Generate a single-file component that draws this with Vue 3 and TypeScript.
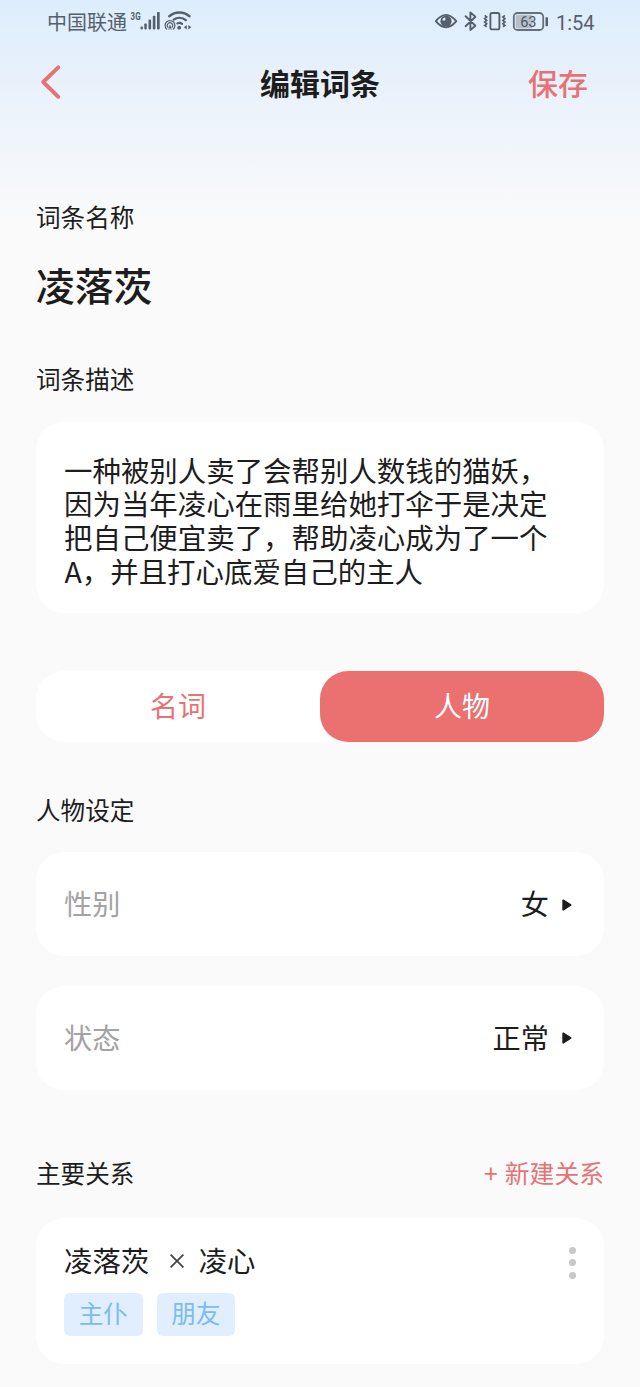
<script setup lang="ts">
import { ref } from 'vue'

interface Setting {
  label: string
  value: string
}

interface Relation {
  from: string
  to: string
  tags: string[]
}

const name = '凌落茨'
const description: string[] = [
  '一种被别人卖了会帮别人数钱的猫妖，',
  '因为当年凌心在雨里给她打伞于是决定',
  '把自己便宜卖了，帮助凌心成为了一个',
  'A，并且打心底爱自己的主人',
]
const tabs: string[] = ['名词', '人物']
const activeTab = ref(1)
const settings: Setting[] = [
  { label: '性别', value: '女' },
  { label: '状态', value: '正常' },
]
const relations: Relation[] = [{ from: '凌落茨', to: '凌心', tags: ['主仆', '朋友'] }]
</script>

<template>
  <div class="page">
    <div class="status">
      <span class="carrier">中国联通</span>
      <svg class="signal" width="62" height="24" viewBox="130 9 62 24">
        <text x="130.6" y="20" class="net" textLength="10" lengthAdjust="spacingAndGlyphs">3G</text>
        <g fill="#55606c">
          <rect x="140.5" y="26.6" width="2.4" height="2.8" rx=".8" />
          <rect x="144.3" y="23.4" width="2.5" height="6" rx=".8" />
          <rect x="148.5" y="19.6" width="2.6" height="9.8" rx=".8" />
          <rect x="152.8" y="15.8" width="2.6" height="13.6" rx=".8" />
          <rect x="157" y="12" width="2.7" height="17.4" rx=".8" />
        </g>
        <g fill="none" stroke="#55606c" stroke-linecap="round">
          <path d="M169.3 16.2C175.3 11.3 183.5 11.3 189.5 16.2" stroke-width="2.4" />
          <path d="M173.7 19.6C177.3 17.1 182.2 17.2 185.8 20.2" stroke-width="2.3" />
          <path d="M177.4 23.4C178.9 22.6 180.8 22.8 182 23.9" stroke-width="2.2" />
          <path d="M166.6 29A4.9 4.9 0 1 1 173.4 29" stroke-width="1.2" />
          <path d="M168 27.3A2.7 2.7 0 1 1 172 27.3" stroke-width="1.1" />
          <path d="M170 25.8L168.9 29.3M170 25.8L171.1 29.3" stroke-width="1" />
        </g>
        <circle cx="179.2" cy="27.7" r="1.9" fill="#55606c" />
        <path d="M186.8 25v4.6l-3-2.3zM188.3 25v4.6l3-2.3z" fill="#55606c" />
      </svg>
      <svg class="indicators" width="116" height="24" viewBox="434 9 116 24">
        <path d="M435.8 21.2Q446 8.5 456.3 21.2Q446 33.5 435.8 21.2Z" fill="none" stroke="#55606c" stroke-width="1.9" stroke-linejoin="round" />
        <circle cx="446" cy="21.2" r="5.6" fill="#55606c" />
        <path d="M442.2 20.2A4.2 4.2 0 0 1 445.2 17.2L445.4 19.4Q445 20.8 443.6 20.6Z" fill="#dcebfa" />
        <path d="M465.6 16.2L475.4 25.7L470.4 30V12.4L475.4 16.7L465.6 26.2" fill="none" stroke="#55606c" stroke-width="1.9" stroke-linejoin="round" stroke-linecap="round" />
        <rect x="490.4" y="13" width="9" height="16.4" rx="1.6" fill="none" stroke="#55606c" stroke-width="1.9" />
        <path d="M484.7 15.4l2 1.6-2 1.7 2 1.7-2 1.7 2 1.7-2 1.7 2 1.2M504.9 15.4l-2 1.6 2 1.7-2 1.7 2 1.7-2 1.7 2 1.7-2 1.2" fill="none" stroke="#55606c" stroke-width="1.7" />
        <rect x="515.6" y="14.8" width="17" height="13.6" rx="2" fill="#b5bfcb" />
        <rect x="513.8" y="13" width="29.4" height="17" rx="3.6" fill="none" stroke="#66707b" stroke-width="1.8" />
        <rect x="545.5" y="17.2" width="2.5" height="9" rx=".8" fill="#55606c" />
        <text x="528.3" y="26.5" text-anchor="middle" class="level">63</text>
      </svg>
      <span class="clock">1:54</span>
    </div>

    <header class="bar">
      <svg class="back" width="24" height="38" viewBox="0 0 24 38">
        <path d="M18.3 4.3L3.2 19L18.3 33.8" fill="none" stroke="#e67275" stroke-width="3.9" stroke-linecap="round" stroke-linejoin="round" />
      </svg>
      <h1 class="title">编辑词条</h1>
      <button class="save">保存</button>
    </header>

    <main class="content">
      <h2 class="label">词条名称</h2>
      <div class="name">{{ name }}</div>

      <h2 class="label">词条描述</h2>
      <div class="card desc">
        <div v-for="line in description" :key="line">{{ line }}</div>
      </div>

      <div class="tabs">
        <button
          v-for="(tab, i) in tabs"
          :key="tab"
          class="tab"
          :class="{ active: i === activeTab }"
          @click="activeTab = i"
        >{{ tab }}</button>
      </div>

      <h2 class="label">人物设定</h2>
      <div class="settings">
        <div v-for="s in settings" :key="s.label" class="card setting">
          <span class="key">{{ s.label }}</span>
          <span class="value">{{ s.value }}</span>
          <svg width="10" height="12" viewBox="0 0 10 12">
            <path d="M1.2 1.3L8.6 6L1.2 10.7Z" fill="#1d1d1d" stroke="#1d1d1d" stroke-width="1.8" stroke-linejoin="round" />
          </svg>
        </div>
      </div>

      <div class="section-head">
        <h2 class="label">主要关系</h2>
        <button class="add"><span class="plus">+</span>新建关系</button>
      </div>
      <div v-for="r in relations" :key="r.to" class="card relation">
        <div class="info">
          <div class="pair">
            <span>{{ r.from }}</span>
            <svg width="16" height="16" viewBox="0 0 16 16">
              <path d="M1.6 1.6L14.4 14.4M14.4 1.6L1.6 14.4" stroke="#444" stroke-width="1.7" />
            </svg>
            <span>{{ r.to }}</span>
          </div>
          <div class="tags">
            <span v-for="t in r.tags" :key="t" class="tag">{{ t }}</span>
          </div>
        </div>
        <div class="more"><i></i><i></i><i></i></div>
      </div>
    </main>
  </div>
</template>

<style>
html,
body {
  margin: 0;
  background: #fafafa;
}
</style>

<style scoped>
.page {
  box-sizing: border-box;
  width: 640px;
  height: 1387px;
  overflow: hidden;
  background: linear-gradient(180deg, #ddedfd 0, #e8f1fb 80px, #f0f5fb 140px, #fafafa 225px);
  color: #1d1d1d;
  font-family: "Noto Sans CJK SC", sans-serif;
}
button {
  padding: 0;
  border: 0;
  background: none;
  font-family: inherit;
}
h1,
h2 {
  margin: 0;
}
.status {
  display: flex;
  align-items: center;
  height: 42px;
  padding-left: 47px;
  color: #55606c;
}
.carrier {
  width: 83px;
  padding-top: 1px;
  font-size: 20px;
  line-height: 42px;
}
.indicators {
  margin-left: 242px;
}
.net {
  fill: #55606c;
  font: bold 10.5px Roboto, sans-serif;
}
.level {
  fill: #4a5560;
  font: 14.5px Roboto, sans-serif;
}
.clock {
  margin: 3px 0 0 6px;
  font: 20px Roboto, sans-serif;
}
.bar {
  display: grid;
  grid-template-columns: 120px 1fr 120px;
  align-items: center;
  height: 80px;
  padding: 0 52px 0 40px;
}
.title {
  padding-left: 12px;
  text-align: center;
  font-size: 30px;
  line-height: 44px;
  font-weight: 700;
}
.save {
  justify-self: end;
  color: #e67275;
  font-size: 30px;
  line-height: 44px;
  font-weight: 500;
}
.content {
  padding: 76px 36px 0;
}
.label {
  height: 36px;
  font-size: 24.6px;
  line-height: 36px;
  font-weight: 400;
}
.name {
  height: 56px;
  margin: 23px 0 47px;
  font-size: 38.8px;
  line-height: 54px;
  font-weight: 500;
}
.card {
  border-radius: 28px;
  background: #fff;
}
.desc {
  box-sizing: border-box;
  height: 191px;
  margin-top: 26px;
  padding: 30.5px 28px 0;
  font-size: 28.45px;
  line-height: 33.8px;
}
.desc div:last-child {
  text-indent: 0.5px;
}
.tabs {
  display: flex;
  height: 70.5px;
  margin: 58px 0 49px;
  border-radius: 28px;
  background: #fff;
}
.tab {
  flex: 1;
  padding-bottom: 2px;
  border-radius: 28px;
  color: #e67275;
  font-size: 28px;
  line-height: 68px;
}
.tab.active {
  background: #eb7070;
  color: #fff;
}
.settings {
  display: grid;
  gap: 29.5px;
  margin: 25.5px 0 64.5px;
}
.setting {
  box-sizing: border-box;
  display: flex;
  align-items: center;
  height: 104px;
  padding: 0 32px 2px 28px;
  font-size: 28.2px;
  line-height: 40px;
}
.setting svg {
  margin: 3px 0 0 13px;
}
.key {
  flex: 1;
  color: #a3a3a3;
}
.section-head {
  display: flex;
  justify-content: space-between;
  margin-bottom: 28px;
}
.add {
  display: flex;
  gap: 7px;
  color: #e67275;
  font-size: 24.8px;
  line-height: 36px;
}
.relation {
  box-sizing: border-box;
  display: flex;
  justify-content: space-between;
  height: 146px;
  padding: 22px 28px 0 28px;
}
.pair {
  display: flex;
  align-items: center;
  height: 40px;
  font-size: 28.4px;
  line-height: 40px;
}
.pair svg {
  margin: 2px 13.5px 0 20px;
}
.tags {
  display: flex;
  gap: 14px;
  margin-top: 13px;
}
.tag {
  width: 78.5px;
  height: 42.5px;
  border-radius: 6px;
  background: #e1eefe;
  color: #7cbcf0;
  text-align: center;
  font-size: 24.6px;
  line-height: 39px;
}
.more {
  display: grid;
  gap: 5.4px;
  align-content: start;
  padding-top: 6.7px;
}
.more i {
  width: 7.2px;
  height: 7.2px;
  border-radius: 50%;
  background: #c8c8c8;
}
</style>
